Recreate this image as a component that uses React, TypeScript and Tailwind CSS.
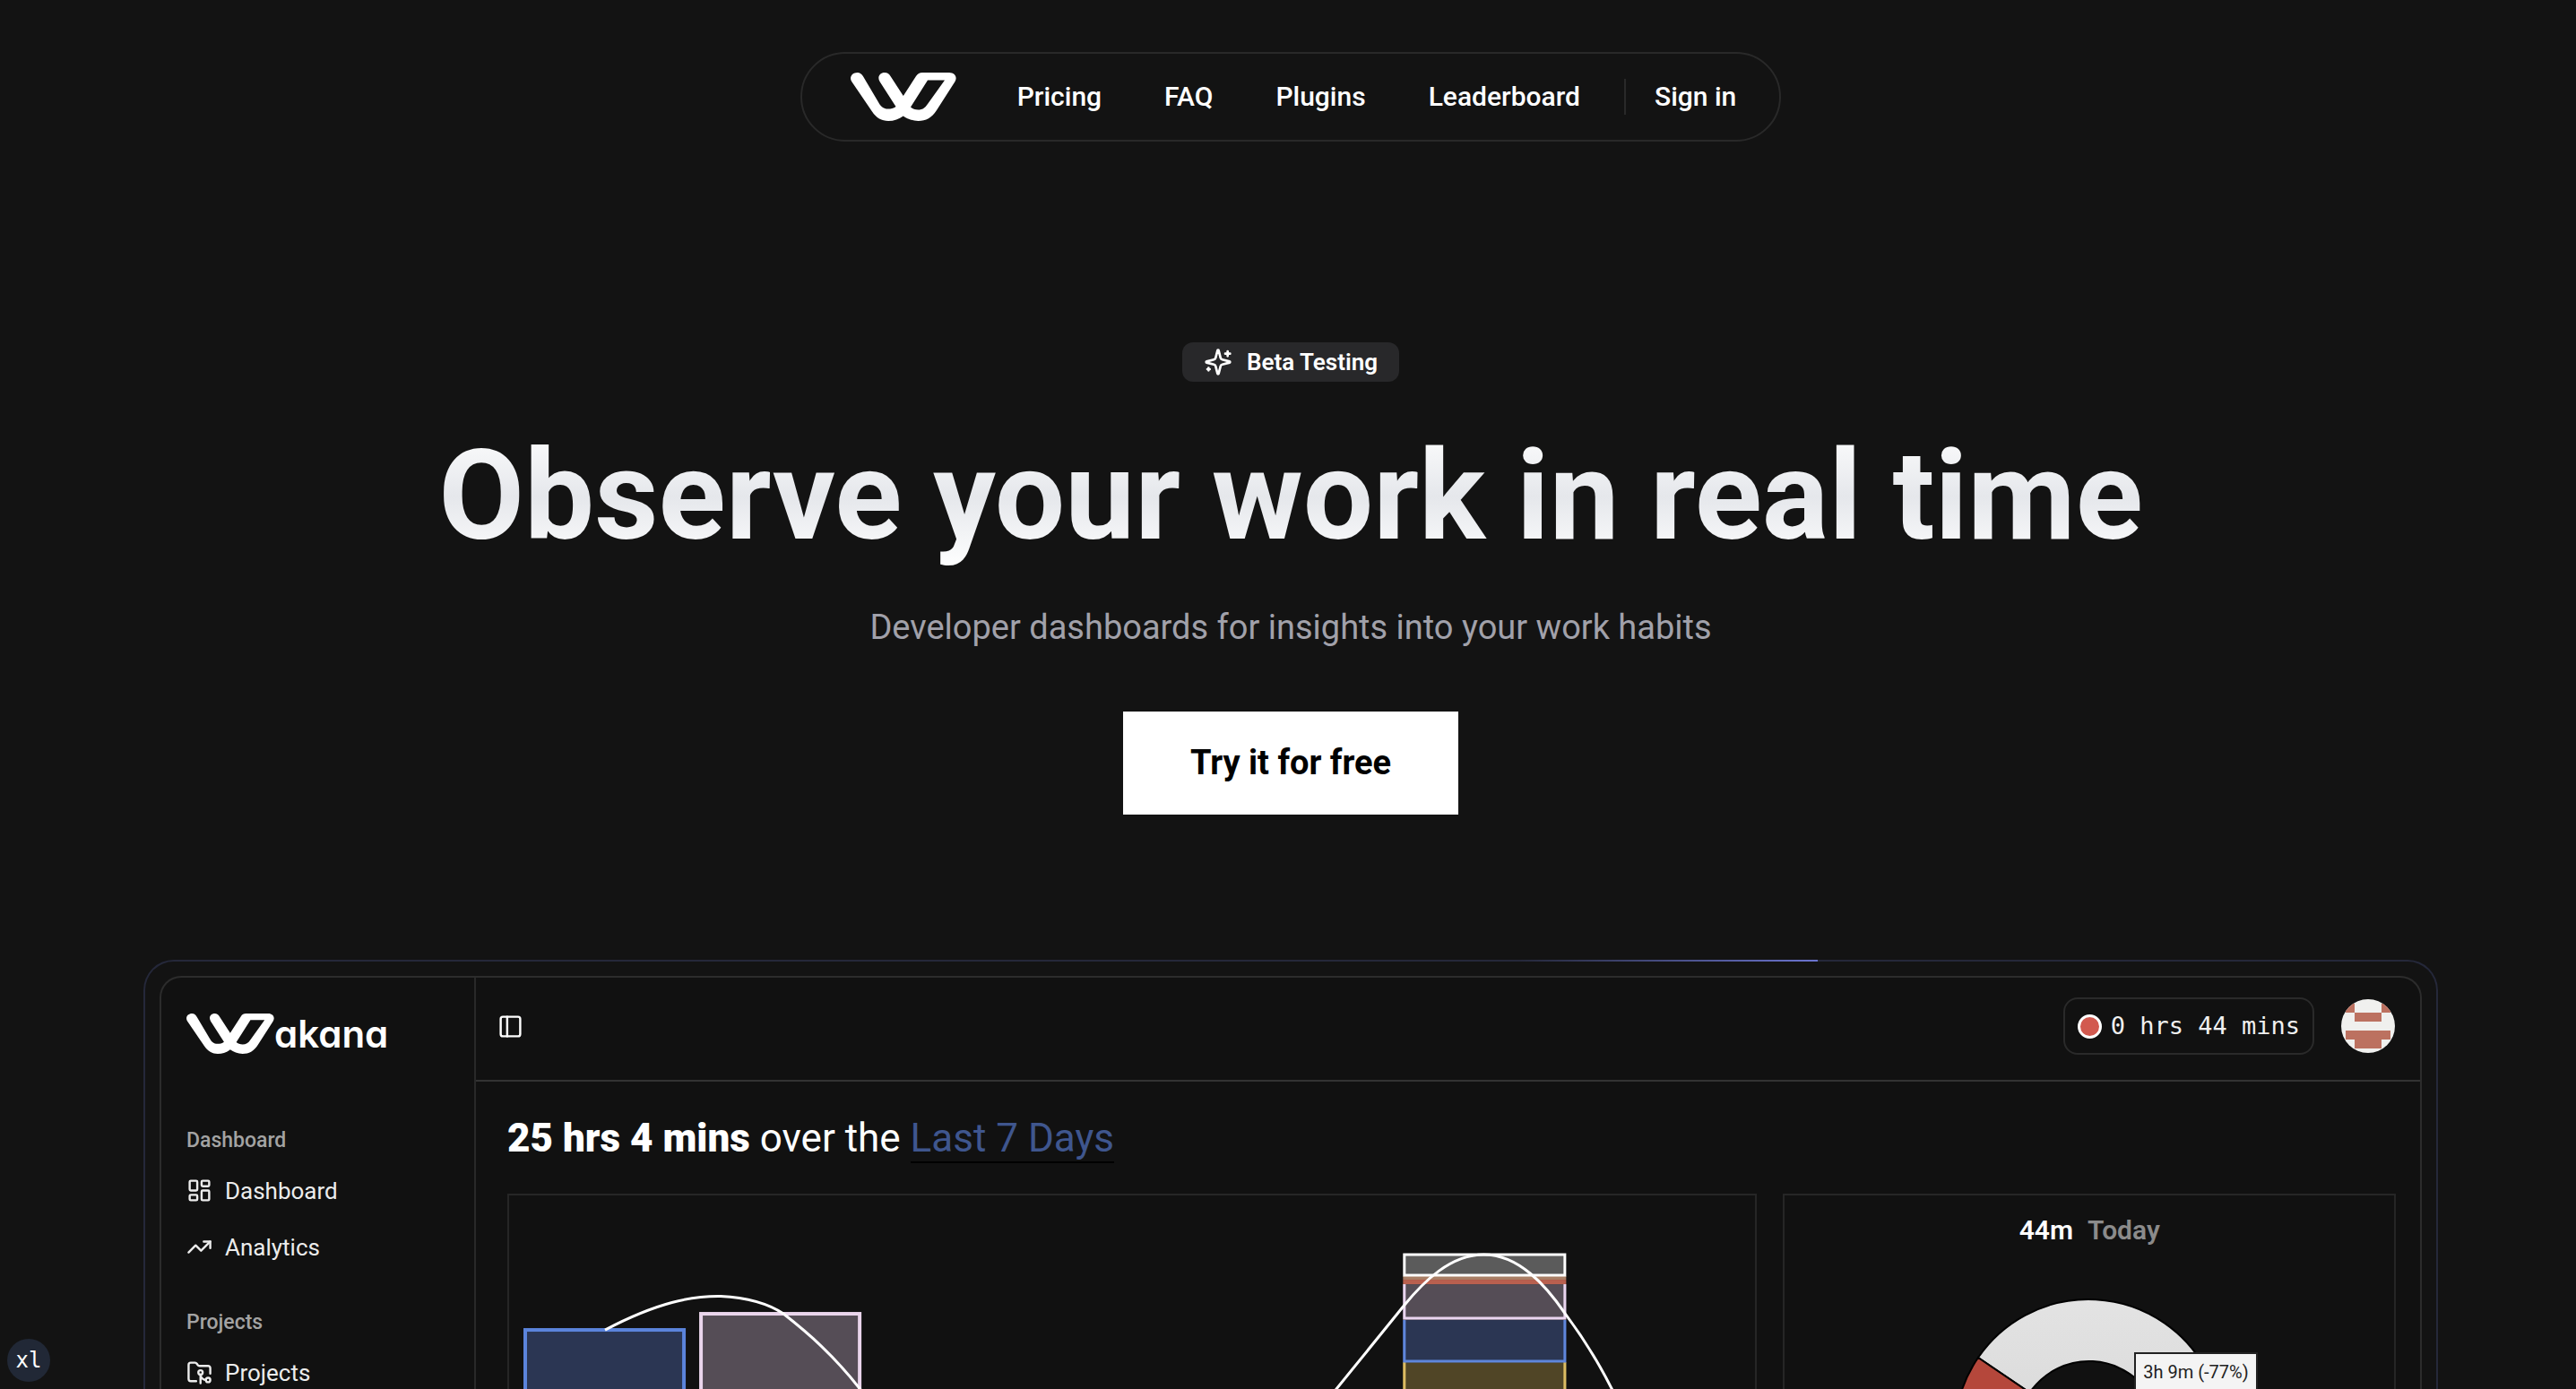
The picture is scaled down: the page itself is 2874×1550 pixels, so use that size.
import type { ReactNode } from "react";
import { FolderGit2, LayoutDashboard, PanelLeft, TrendingUp } from "lucide-react";

function LogoMark({ className }: { className: string }) {
  return (
    <svg viewBox="0 0 118 54" className={className} fill="currentColor" fillRule="evenodd" aria-hidden="true">
      <path d="M7.5 0C10.5 0 12.5 1.8 14 4.3L31 33C34 38.5 37 40.5 41.5 40.5C45 40.5 48 40 50.5 38L32.5 10C29.5 5 32.5 0 38 0C41 0 43 1.5 44.5 4L58.8 26L73 4C74.8 1.2 77 0 80 0H110C116 0 119.5 5 116.5 10L96 42C90.5 50.5 84 54 75.5 54C69 54 63 51.5 58.8 48.5C54 52 48.5 54 42 54C35 54 28.5 50.5 24 43.5L1.2 10C-2 5 2 0 7.5 0ZM86 8.5L67 38.5C69 40.5 72 41.5 75.5 41.5C80 41.5 83 39.5 86 35L105 8.5Z" />
    </svg>
  );
}

function SparklesIcon() {
  return (
    <svg
      viewBox="0 0 24 24"
      className="size-8"
      fill="none"
      stroke="currentColor"
      strokeWidth="2"
      strokeLinecap="round"
      strokeLinejoin="round"
      aria-hidden="true"
    >
      <path d="M9.937 15.5A2 2 0 0 0 8.5 14.063l-6.135-1.582a.5.5 0 0 1 0-.962L8.5 9.936A2 2 0 0 0 9.937 8.5l1.582-6.135a.5.5 0 0 1 .963 0L14.063 8.5A2 2 0 0 0 15.5 9.937l6.135 1.581a.5.5 0 0 1 0 .964L15.5 14.063a2 2 0 0 0-1.437 1.437l-1.582 6.135a.5.5 0 0 1-.963 0z" />
      <path d="M20 3v4M22 5h-4M4 17v2M5 18H3" />
    </svg>
  );
}

function NavBar() {
  return (
    <nav className="mt-[58px] flex h-[100px] items-center rounded-full border-2 border-[#292929] pr-12 pl-[54px] text-[30px] leading-10 font-medium">
      <a href="#home" aria-label="Wakana home" className="mr-[68px]">
        <LogoMark className="h-[54px] w-[118px]" />
      </a>
      <div className="flex items-center gap-[70px]">
        <a href="#pricing">Pricing</a>
        <a href="#faq">FAQ</a>
        <a href="#plugins">Plugins</a>
        <a href="#leaderboard">Leaderboard</a>
      </div>
      <div className="mr-8 ml-[49px] h-10 w-0.5 bg-[#292929]" />
      <a href="#signin">Sign in</a>
    </nav>
  );
}

function SideItem({ icon, label }: { icon: ReactNode; label: string }) {
  return (
    <a href={`#app-${label.toLowerCase()}`} className="flex h-[63px] items-center gap-3.5 text-[26px] leading-8 text-[#ececec]">
      {icon}
      {label}
    </a>
  );
}

function Sidebar() {
  return (
    <aside className="w-[351px] shrink-0 border-r-2 border-[#292929] pt-10 pl-7">
      <div className="flex h-[45px] items-center">
        <LogoMark className="h-[45px] w-[98px]" />
        <span className="font-['Inter',sans-serif] text-[42px] leading-[45px] font-semibold [font-feature-settings:'cv11']">akana</span>
      </div>
      <p className="mt-[83px] mb-2.5 text-[23px] leading-7 font-medium text-[#a3a3a3]">Dashboard</p>
      <SideItem icon={<LayoutDashboard className="size-[29px]" strokeWidth={2} />} label="Dashboard" />
      <SideItem icon={<TrendingUp className="size-[29px]" strokeWidth={2} />} label="Analytics" />
      <p className="mt-[39px] mb-2.5 text-[23px] leading-7 font-medium text-[#a3a3a3]">Projects</p>
      <SideItem icon={<FolderGit2 className="size-[29px]" strokeWidth={2} />} label="Projects" />
    </aside>
  );
}

function Avatar() {
  return (
    <svg viewBox="0 0 60 60" className="size-[60px] rounded-full" role="img" aria-label="User avatar">
      <rect width="60" height="60" fill="#f0f0ee" />
      <path fill="#bc7160" d="M5 5h10v10H5zM45 5h10v10H45zM15 15h30v10H15zM5 35h50v10H45v10H15V45H5z" />
    </svg>
  );
}

function ActivityChart() {
  return (
    <svg viewBox="0 0 1390 400" className="w-full" role="img" aria-label="Daily coding activity">
      <g strokeWidth="4">
        <rect x="18" y="150" width="177" height="260" fill="#2b3653" stroke="#5b84dc" />
        <rect x="214" y="132" width="177" height="280" fill="#554d56" stroke="#ead5ec" />
      </g>
      <g>
        <rect x="997" y="186" width="182" height="230" fill="#504526" />
        <path d="M998.500 186V410M1177.500 186V410" stroke="#dcbc62" strokeWidth="3" />
        <rect x="997" y="139" width="182" height="47" fill="#2b3653" />
        <path d="M998.500 139V185H1177.500V139" fill="none" stroke="#5f86dc" strokeWidth="3" />
        <rect x="997" y="99" width="182" height="40" fill="#554d56" />
        <path d="M998.500 99V137H1177.500V99" fill="none" stroke="#ead5f0" strokeWidth="3" />
        <rect x="997" y="90" width="182" height="4" fill="#a97f66" />
        <rect x="997" y="94" width="182" height="5" fill="#b9604f" />
        <rect x="998.500" y="66" width="179" height="23" fill="#5b5b5b" stroke="#fff" strokeWidth="3" />
      </g>
      <g fill="none" stroke="#fff" strokeWidth="3">
        <path d="M107 150C166 119 204 112 236 112.500C266 114 288 120 306 132C334 154 362 178 393 218" />
        <path d="M921 218L998 123C1020 96 1050 66 1087 66C1126 66 1156 100 1178 132C1196 156 1214 184 1231 218" />
      </g>
    </svg>
  );
}

function TodayChart() {
  return (
    <div className="relative mx-auto mt-14 w-[300px]">
      <svg viewBox="0 0 300 300" className="size-[300px]" role="img" aria-label="Time today by project">
        <defs>
          <linearGradient id="ring" x1="0" y1="0" x2="0" y2="1">
            <stop offset="0" stopColor="#e3e3e3" />
            <stop offset="1" stopColor="#cfcfcf" />
          </linearGradient>
        </defs>
        <g stroke="#000" strokeWidth="2">
          <path fill="url(#ring)" d="M26 66A149 149 0 1 1 150 299V230A80 80 0 1 0 83.500 105Z" />
          <path fill="#b5473b" d="M26 66A149 149 0 0 0 150 299V230A80 80 0 0 1 83.500 105Z" />
        </g>
      </svg>
      <div className="absolute top-[60px] left-[200px] border-2 border-[#222] bg-[#f4f4f4] px-2 py-1.5 text-[20px] leading-7 whitespace-nowrap text-[#222]">
        3h 9m (-77%)
      </div>
    </div>
  );
}

function DashboardPreview() {
  return (
    <section className="relative mt-[162px] w-full max-w-[2560px] rounded-t-[34px] border-2 border-b-0 border-[#25283a] p-4 pb-0">
      <div className="absolute -top-0.5 left-[60%] h-0.5 w-[332px] bg-linear-to-r from-transparent to-[#6b74cf]" />
      <div className="flex rounded-t-3xl border-2 border-b-0 border-[#2c2c2c] bg-[#111111]">
        <Sidebar />
        <div className="min-w-0 flex-1">
          <header className="flex h-[116px] items-center border-b-2 border-[#333333] pr-7 pb-1.5 pl-6">
            <button type="button" aria-label="Toggle sidebar">
              <PanelLeft className="size-[29px]" strokeWidth={2} />
            </button>
            <div className="mr-[30px] ml-auto flex h-16 items-center gap-2.5 rounded-2xl border-2 border-[#2a2a2a] px-3.5 font-['DejaVu_Sans_Mono',monospace] text-[27px] leading-8 text-[#f0f0f0]">
              <span className="size-[27px] rounded-full border-[3px] border-white bg-[#d2594f]" />
              <span>0 hrs 44 mins</span>
            </div>
            <Avatar />
          </header>
          <div className="pt-[37px] pr-[27px] pl-[35px]">
            <h2 className="text-[44px] leading-[52px]">
              <strong className="font-black">25 hrs 4 mins</strong> over the{" "}
              <a href="#range" className="border-b-2 border-black text-[#3f568e]">
                Last 7 Days
              </a>
            </h2>
            <div className="mt-9 grid grid-cols-[51fr_25fr] gap-[29px]">
              <div className="border-2 border-[#262626]">
                <ActivityChart />
              </div>
              <div className="border-2 border-[#262626] pt-[19px]">
                <p className="flex justify-center gap-4 text-[30px] leading-10 font-semibold">
                  <span>44m</span>
                  <span className="text-[#8b8b8b]">Today</span>
                </p>
                <TodayChart />
              </div>
            </div>
          </div>
        </div>
      </div>
    </section>
  );
}

export default function App() {
  return (
    <div className="h-screen overflow-hidden bg-[#131313] font-['Roboto',sans-serif] text-white">
      <main className="flex flex-col items-center pr-[154px] pl-40">
        <NavBar />
        <div className="mt-56 flex h-11 items-center gap-4 rounded-xl bg-[#28282a] px-6 text-[26px] font-semibold">
          <SparklesIcon />
          Beta Testing
        </div>
        <h1 className="mt-12 bg-linear-to-b from-white via-gray-200 to-white bg-clip-text text-[139px] leading-[160px] font-bold text-transparent">
          Observe your work in real time
        </h1>
        <p className="mt-[42px] text-[38px] leading-[48px] text-[#a1a1aa]">
          Developer dashboards for insights into your work habits
        </p>
        <button type="button" className="mt-[70px] h-[115px] bg-white px-[75px] text-[38px] font-bold text-black">
          Try it for free
        </button>
        <DashboardPreview />
      </main>
      <div className="fixed bottom-2 left-2 flex size-12 items-center justify-center rounded-full bg-[#212836] font-['DejaVu_Sans_Mono',monospace] text-2xl">
        xl
      </div>
    </div>
  );
}
